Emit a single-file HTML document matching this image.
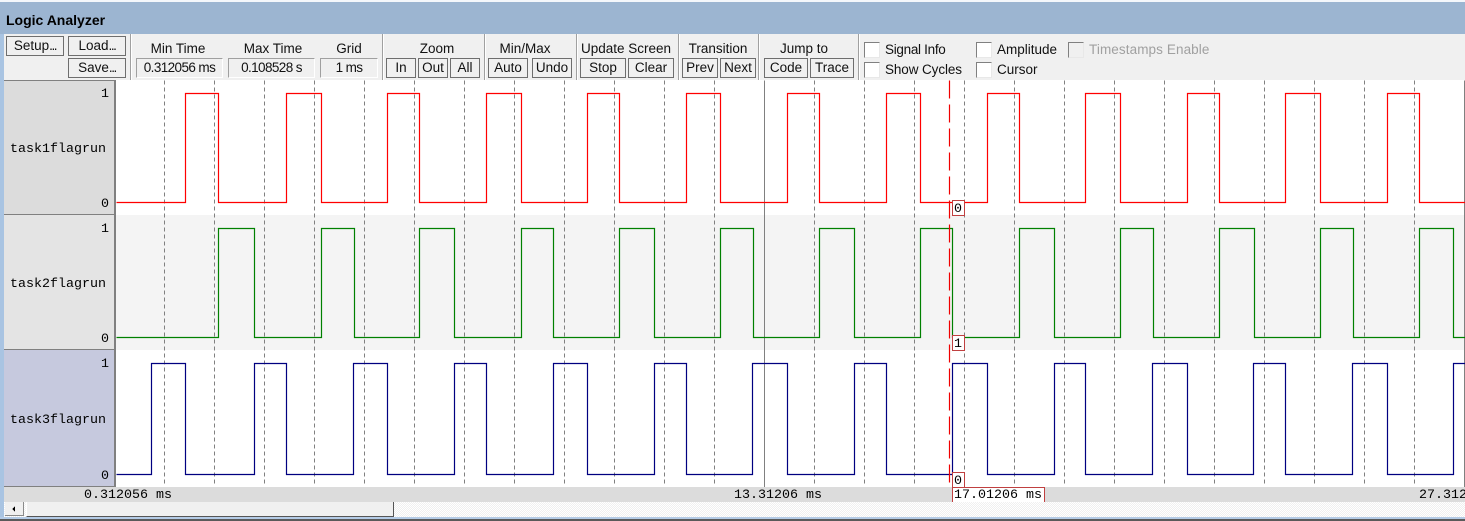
<!DOCTYPE html>
<html><head><meta charset="utf-8"><title>Logic Analyzer</title>
<style>
html,body{margin:0;padding:0;background:#fff}
#app{position:relative;width:1465px;height:521px;overflow:hidden;background:#fff;font-family:"Liberation Sans",sans-serif;font-size:13.5px;color:#000}
#app div{position:absolute;box-sizing:border-box;white-space:nowrap}
.b{height:20px;top:58px;border:1px solid #6e6e6e;background:#f0f0f0;text-align:center;line-height:17px;color:#111}
.b span{letter-spacing:-1.4px}
.t{top:41px;height:16px;line-height:16px;text-align:center;color:#111;transform:translateX(-50%)}
.s{top:58px;height:20px;background:#f0f0f0;border:1px solid;border-color:#a0a0a0 #fff #fff #a0a0a0;text-align:center;line-height:18px;color:#111;letter-spacing:-.6px}
.v{top:34px;width:2px;height:46px;border-left:1px solid #a0a0a0;border-right:1px solid #fff}
.c{width:16px;height:16px;background:#fff;border:1px solid;border-color:#808080 #e8e8e8 #e8e8e8 #808080}
.l{height:16px;line-height:16px;color:#111}
.m{font-family:"Liberation Mono",monospace;font-size:13.33px;line-height:15px;height:15px;color:#000}
.tag{width:13px;height:16px;background:#fff;border:1px solid #c04040;left:952px}
</style></head><body>
<div id="app">
<div style="left:0;top:0;width:1465px;height:2px;background:#f4f7fb"></div>
<div style="left:0;top:2px;width:1465px;height:32px;background:#9cb5d1"></div>
<div style="left:6px;top:12px;font-weight:bold;font-size:14px;line-height:16px;color:#000">Logic Analyzer</div>
<div style="left:0;top:34px;width:1465px;height:46px;background:#f0f0f0"></div>
<div style="left:0;top:34px;width:4px;height:487px;background:#a9c4e2"></div>

<div class="b" style="left:6px;top:36px;width:58px">Setup<span>...</span></div>
<div class="b" style="left:68px;top:36px;width:58px">Load<span>...</span></div>
<div class="b" style="left:68px;width:58px">Save<span>...</span></div>
<div class="v" style="left:130px"></div>

<div class="t" style="left:178px">Min Time</div>
<div class="t" style="left:273px">Max Time</div>
<div class="t" style="left:349px">Grid</div>
<div class="s" style="left:136px;width:87px">0.312056 ms</div>
<div class="s" style="left:228px;width:87px">0.108528 s</div>
<div class="s" style="left:320px;width:58px">1 ms</div>
<div class="v" style="left:382px"></div>

<div class="t" style="left:437px">Zoom</div>
<div class="b" style="left:386px;width:30px">In</div>
<div class="b" style="left:418px;width:30px">Out</div>
<div class="b" style="left:450px;width:30px">All</div>
<div class="v" style="left:484px"></div>

<div class="t" style="left:525px">Min/Max</div>
<div class="b" style="left:488px;width:40px">Auto</div>
<div class="b" style="left:532px;width:40px">Undo</div>
<div class="v" style="left:576px"></div>

<div class="t" style="left:626px">Update Screen</div>
<div class="b" style="left:580px;width:46px">Stop</div>
<div class="b" style="left:628px;width:46px">Clear</div>
<div class="v" style="left:678px"></div>

<div class="t" style="left:718px">Transition</div>
<div class="b" style="left:682px;width:36px">Prev</div>
<div class="b" style="left:720px;width:36px">Next</div>
<div class="v" style="left:758px"></div>

<div class="t" style="left:804px">Jump to</div>
<div class="b" style="left:764px;width:44px">Code</div>
<div class="b" style="left:810px;width:44px">Trace</div>
<div class="v" style="left:858px"></div>

<div class="c" style="left:864px;top:42px"></div>
<div class="l" style="left:885px;top:42px;letter-spacing:-.3px">Signal Info</div>
<div class="c" style="left:864px;top:62px"></div>
<div class="l" style="left:885px;top:62px;letter-spacing:-.1px">Show Cycles</div>
<div class="c" style="left:976px;top:42px"></div>
<div class="l" style="left:997px;top:42px">Amplitude</div>
<div class="c" style="left:976px;top:62px"></div>
<div class="l" style="left:997px;top:62px">Cursor</div>
<div class="c" style="left:1068px;top:42px;background:#f0f0f0"></div>
<div class="l" style="left:1089px;top:42px;color:#a0a0a0;letter-spacing:.1px">Timestamps Enable</div>

<div style="left:4px;top:80px;width:112px;height:135px;background:#dcdcdc;border-right:2px solid #808080;border-bottom:1px solid #808080;border-top:1px solid #808080"></div>
<div style="left:4px;top:215px;width:112px;height:135px;background:#e4e4e4;border-right:2px solid #808080;border-bottom:1px solid #808080"></div>
<div style="left:4px;top:350px;width:112px;height:137px;background:#c6c9de;border-right:2px solid #808080;border-bottom:1px solid #808080"></div>
<div style="left:116px;top:215px;width:1349px;height:135px;background:#f4f4f4"></div>

<svg style="position:absolute;left:0;top:0" width="1465" height="521" fill="none">
<g transform="translate(.5,.5)">
<path shape-rendering="crispEdges" stroke="#808080" stroke-dasharray="4 3" d="M164 80V486M214 80V486M264 80V486M314 80V486M364 80V486M414 80V486M464 80V486M514 80V486M564 80V486M614 80V486M664 80V486M714 80V486M814 80V486M864 80V486M914 80V486M964 80V486M1014 80V486M1064 80V486M1114 80V486M1164 80V486M1214 80V486M1264 80V486M1314 80V486M1364 80V486M1414 80V486"/>
<path shape-rendering="crispEdges" stroke="#808080" d="M764 80V487M1464 80V487"/>
<g stroke-width="1.2">
<path stroke="#ff0000" d="M116 202H185V93H218V202H286V93H321V202H387V93H419V202H486V93H521V202H587V93H619V202H686V93H720V202H787V93H819V202H886V93H920V202H987V93H1019V202H1085V93H1120V202H1187V93H1219V202H1285V93H1320V202H1387V93H1419V202H1465"/>
<path stroke="#008000" d="M116 337H218V228H254V337H321V228H354V337H419V228H454V337H521V228H553V337H619V228H654V337H720V228H753V337H819V228H854V337H920V228H952V337H1019V228H1054V337H1120V228H1153V337H1219V228H1254V337H1320V228H1353V337H1419V228H1453V337H1465"/>
<path stroke="#000080" d="M116 474H151V363H185V474H254V363H286V474H353V363H387V474H454V363H486V474H553V363H587V474H654V363H686V474H752V363H787V474H854V363H886V474H952V363H987V474H1054V363H1085V474H1152V363H1187V474H1253V363H1285V474H1352V363H1387V474H1453V363H1465"/>
<path stroke="#f00000" stroke-dasharray="18 6" d="M949 80V487"/>
</g>
</g>
</svg>

<div class="m" style="left:10px;top:141px;margin-top:1px">task1flagrun</div>
<div class="m" style="left:10px;top:277px">task2flagrun</div>
<div class="m" style="left:10px;top:413px">task3flagrun</div>
<div class="m" style="left:101px;top:87px">1</div>
<div class="m" style="left:101px;top:197px">0</div>
<div class="m" style="left:101px;top:222px">1</div>
<div class="m" style="left:101px;top:332px">0</div>
<div class="m" style="left:101px;top:357px">1</div>
<div class="m" style="left:101px;top:469px">0</div>

<div class="tag" style="top:200px"></div><div class="m" style="left:954px;top:202px">0</div>
<div class="tag" style="top:335px"></div><div class="m" style="left:954px;top:337px">1</div>
<div class="tag" style="top:472px"></div><div class="m" style="left:954px;top:474px">0</div>

<div style="left:4px;top:487px;width:1461px;height:15px;background:#dcdcdc"></div>
<div class="m" style="left:84px;top:488px">0.312056 ms</div>
<div class="m" style="left:734px;top:488px">13.31206 ms</div>
<div style="left:952px;top:487px;width:93px;height:15px;background:#fff;border:1px solid #c04040;border-bottom:none"></div>
<div class="m" style="left:954px;top:488px">17.01206 ms</div>
<div class="m" style="left:1419px;top:488px;width:46px;overflow:hidden">27.31206 ms</div>

<div style="left:4px;top:502px;width:1461px;height:15px;background:repeating-conic-gradient(#f0f0f0 0 25%,#fff 0 50%) 0 0/2px 2px"></div>
<div style="left:5px;top:502px;width:19px;height:14px;background:#f0f0f0;border-right:1px solid #8a8a8a;border-bottom:1px solid #8a8a8a"></div>
<svg style="position:absolute;left:11px;top:506px" width="6" height="7" shape-rendering="crispEdges"><polygon points="4,0 4,6 1,3" fill="#000"/></svg>
<div style="left:26px;top:502px;width:368px;height:15px;background:#f0f0f0;border-left:1px solid #fff;border-right:1px solid #555;border-bottom:1px solid #555"></div>

<div style="left:0;top:517px;width:1465px;height:2px;background:#b4cbe6"></div>
<div style="left:0;top:519px;width:1465px;height:2px;background:#5a5a5a"></div>
</div>
</body></html>
